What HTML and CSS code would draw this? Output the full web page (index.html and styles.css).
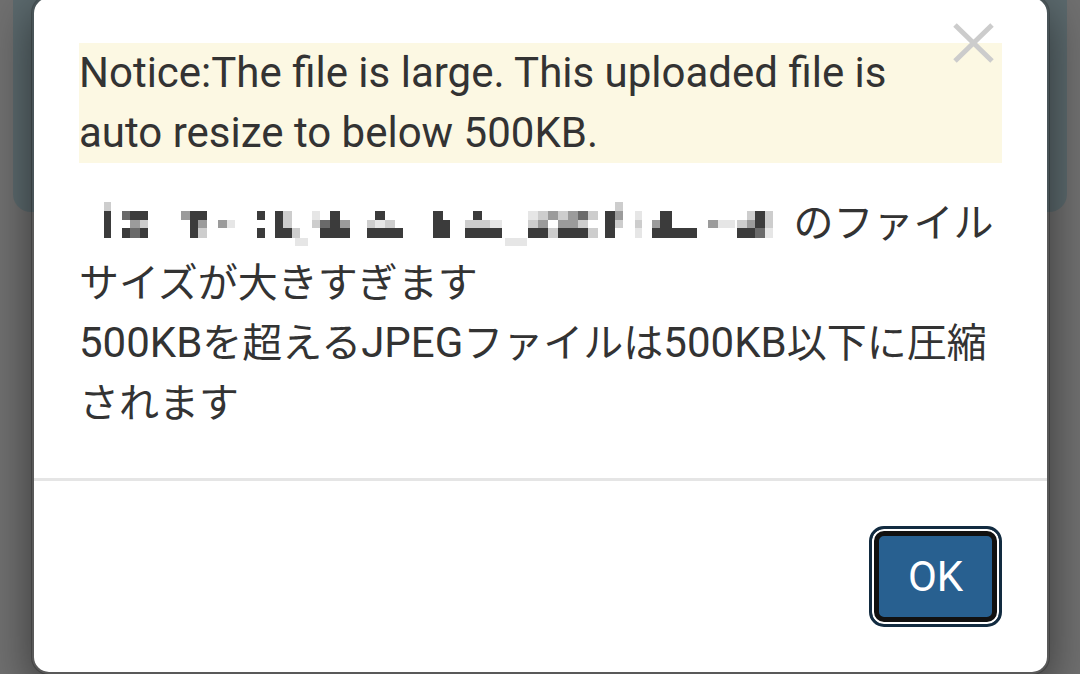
FILE: index.html
```html
<!DOCTYPE html>
<html lang="ja">
<head>
  <meta charset="UTF-8" />
  <title>ファイルサイズ</title>
  <link rel="stylesheet" href="styles.css">
</head>

<body>
  <!-- pagina de fondo (atenuada) -->
  <div class="pagina">
    <div class="panel"></div>
  </div>

  <div class="modal">
    <div class="modal-content">
      <button class="close" aria-label="Close">
        <svg width="41" height="40" viewBox="0 0 41 40">
          <path d="M2 2 L39 38 M39 2 L2 38" stroke="#cccccc" stroke-width="5" fill="none" />
        </svg>
      </button>

      <div class="modal-body">
        <div class="aviso">Notice:The file is large. This uploaded file is<br>auto resize to below 500KB.</div>

        <p class="mensaje"><svg class="mosaico" width="704" height="60" viewBox="0 0 704 60">
            <defs>
              <filter id="suave"><feGaussianBlur stdDeviation="0.7" /></filter>
            </defs>
            <g filter="url(#suave)">
              <g fill="#e6e6e6">
                <rect x="148" y="27" width="8" height="8" /><rect x="216" y="45" width="13" height="8" />
                <rect x="233" y="18" width="8" height="9" /><rect x="296" y="27" width="10" height="8" />
                <rect x="411" y="27" width="12" height="8" /><rect x="426" y="45" width="22" height="8" />
                <rect x="449" y="18" width="10" height="9" /><rect x="556" y="18" width="7" height="9" />
                <rect x="556" y="35" width="7" height="10" /><rect x="639" y="27" width="17" height="8" />
                <rect x="686" y="35" width="8" height="10" />
              </g>
              <g fill="#cdcdcd">
                <rect x="25" y="9" width="7" height="9" /><rect x="61" y="27" width="8" height="8" />
                <rect x="119" y="35" width="9" height="10" /><rect x="204" y="18" width="9" height="17" />
                <rect x="213" y="35" width="8" height="10" /><rect x="233" y="27" width="8" height="8" />
                <rect x="288" y="27" width="8" height="8" /><rect x="306" y="27" width="10" height="8" />
                <rect x="386" y="27" width="8" height="8" /><rect x="394" y="27" width="9" height="8" />
                <rect x="403" y="27" width="8" height="8" /><rect x="449" y="27" width="10" height="8" />
                <rect x="459" y="18" width="10" height="9" /><rect x="469" y="35" width="10" height="10" />
                <rect x="479" y="18" width="10" height="9" /><rect x="499" y="27" width="10" height="8" />
                <rect x="509" y="18" width="10" height="9" /><rect x="509" y="35" width="10" height="10" />
                <rect x="536" y="9" width="8" height="9" /><rect x="536" y="27" width="8" height="8" />
                <rect x="556" y="27" width="7" height="8" /><rect x="658" y="27" width="10" height="8" />
                <rect x="668" y="18" width="8" height="9" /><rect x="686" y="18" width="8" height="17" />
              </g>
              <g fill="#9b9b9b">
                <rect x="51" y="27" width="10" height="8" /><rect x="102" y="18" width="9" height="9" />
                <rect x="119" y="27" width="9" height="8" /><rect x="139" y="27" width="9" height="8" />
                <rect x="261" y="27" width="10" height="8" /><rect x="459" y="27" width="10" height="8" />
                <rect x="469" y="18" width="10" height="9" /><rect x="479" y="27" width="10" height="8" />
                <rect x="489" y="18" width="10" height="9" /><rect x="489" y="27" width="10" height="8" />
                <rect x="536" y="18" width="8" height="9" /><rect x="573" y="27" width="8" height="8" />
                <rect x="629" y="27" width="10" height="8" /><rect x="668" y="27" width="8" height="8" />
              </g>
              <g fill="#6a6a6a">
                <rect x="43" y="18" width="8" height="9" /><rect x="51" y="35" width="10" height="10" />
                <rect x="241" y="27" width="10" height="8" /><rect x="499" y="18" width="10" height="9" />
                <rect x="676" y="35" width="10" height="10" />
              </g>
              <g fill="#3a3a3a">
                <rect x="25" y="18" width="7" height="27" /><rect x="51" y="18" width="10" height="9" />
                <rect x="61" y="18" width="8" height="9" /><rect x="43" y="35" width="8" height="10" />
                <rect x="61" y="35" width="8" height="10" /><rect x="111" y="18" width="8" height="27" />
                <rect x="119" y="18" width="9" height="9" /><rect x="178" y="18" width="8" height="9" />
                <rect x="178" y="35" width="8" height="10" /><rect x="196" y="18" width="8" height="27" />
                <rect x="204" y="35" width="9" height="10" /><rect x="251" y="18" width="10" height="27" />
                <rect x="241" y="35" width="10" height="10" /><rect x="261" y="35" width="10" height="10" />
                <rect x="288" y="35" width="8" height="10" /><rect x="296" y="18" width="10" height="9" />
                <rect x="296" y="35" width="10" height="10" /><rect x="306" y="35" width="10" height="10" />
                <rect x="316" y="35" width="8" height="10" /><rect x="354" y="18" width="10" height="27" />
                <rect x="364" y="27" width="7" height="18" /><rect x="386" y="35" width="8" height="10" />
                <rect x="394" y="18" width="9" height="9" /><rect x="394" y="35" width="9" height="10" />
                <rect x="403" y="35" width="8" height="10" /><rect x="411" y="35" width="12" height="10" />
                <rect x="449" y="35" width="10" height="10" /><rect x="459" y="35" width="10" height="10" />
                <rect x="479" y="35" width="10" height="10" /><rect x="489" y="35" width="10" height="10" />
                <rect x="499" y="35" width="10" height="10" /><rect x="526" y="18" width="10" height="27" />
                <rect x="573" y="35" width="8" height="10" /><rect x="581" y="18" width="12" height="27" />
                <rect x="593" y="35" width="25" height="10" /><rect x="658" y="35" width="10" height="10" />
                <rect x="668" y="35" width="8" height="10" /><rect x="676" y="18" width="10" height="17" />
              </g>
            </g>
          </svg> <span class="ja">のファイル</span><br><span class="ja">サイズが大きすぎます</span><br>500KB<span class="ja">を超える</span>JPEG<span class="ja">ファイルは</span>500KB<span class="ja">以下に圧縮</span><br><span class="ja">されます</span></p>
      </div>

      <div class="modal-footer">
        <button class="btn-ok">OK</button>
      </div>
    </div>
  </div>
</body>
</html>
```

FILE: styles.css
```css
html, body {
  margin: 0;
  height: 100%;
  overflow: hidden;
}

body {
  background-color: #707070;
  color: #333333;
  font-family: Roboto, "Noto Sans CJK JP", sans-serif;
}

.pagina {
  padding: 0 13px;
}

.panel {
  height: 212px;
  background-color: #5c6a6e;
  border-radius: 0 0 18px 18px;
}

/* ventana modal */
.modal {
  position: absolute;
  top: -5px;
  left: 31px;
  width: 1019px;
}

.modal-content {
  position: relative;
  background-color: #fff;
  border: 3px solid rgba(0, 0, 0, 0.2);
  border-radius: 18px;
  background-clip: padding-box;
  box-shadow: 0 15px 45px rgba(0, 0, 0, 0.5);
}

.close {
  position: absolute;
  top: 25px;
  right: 53px;
  width: 41px;
  height: 40px;
  padding: 0;
  border: none;
  background: transparent;
  cursor: pointer;
}

.close svg {
  display: block;
}

.modal-body {
  padding: 45px;
  font-size: 42px;
  line-height: 60px;
}

.aviso {
  background-color: #fcf8e3;
  margin-bottom: 30px;
  white-space: nowrap;
}

.mensaje {
  margin: 0;
  white-space: nowrap;
}

.ja {
  font-size: 40px;
  line-height: 40px;
}

.mosaico {
  vertical-align: top;
}

.modal-footer {
  display: flex;
  justify-content: flex-end;
  padding: 45px;
  border-top: 3px solid #e5e5e5;
}

.btn-ok {
  box-sizing: border-box;
  width: 133px;
  height: 101px;
  padding: 0;
  font-family: Roboto, sans-serif;
  font-size: 42px;
  color: #fff;
  background-color: #286090;
  border: 3px solid #122b40;
  border-radius: 15px;
  box-shadow: inset 0 0 0 2px #fff, inset 0 0 0 7px #111;
  cursor: pointer;
}
```
